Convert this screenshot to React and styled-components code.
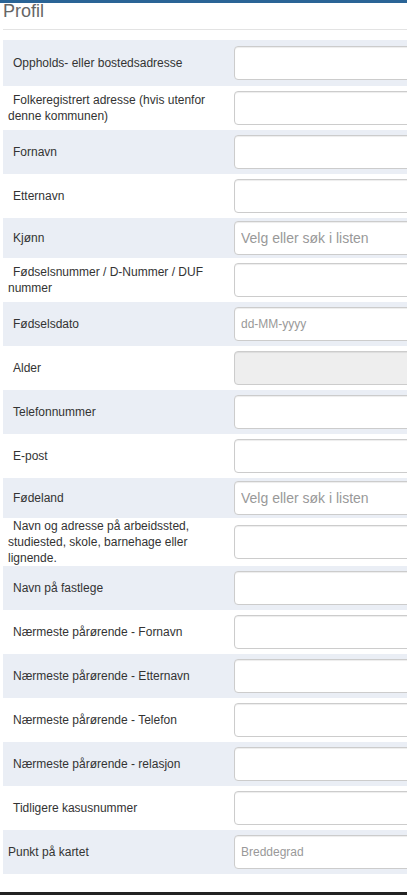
import React from 'react'
import styled, { createGlobalStyle } from 'styled-components'

const GlobalStyle = createGlobalStyle`
  html, body {
    margin: 0;
    padding: 0;
    background: #ffffff;
    overflow: hidden;
  }
  body {
    font-family: "Liberation Sans", Arial, sans-serif;
    color: #333333;
  }
  * {
    box-sizing: border-box;
  }
`

const fields = [
  { label: 'Oppholds- eller bostedsadresse' },
  { label: 'Folkeregistrert adresse (hvis utenfor denne kommunen)' },
  { label: 'Fornavn' },
  { label: 'Etternavn' },
  { label: 'Kjønn', select: true, placeholder: 'Velg eller søk i listen' },
  { label: 'Fødselsnummer / D-Nummer / DUF nummer' },
  { label: 'Fødselsdato', placeholder: 'dd-MM-yyyy' },
  { label: 'Alder', disabled: true },
  { label: 'Telefonnummer' },
  { label: 'E-post' },
  { label: 'Fødeland', select: true, placeholder: 'Velg eller søk i listen' },
  { label: 'Navn og adresse på arbeidssted, studiested, skole, barnehage eller lignende.' },
  { label: 'Navn på fastlege' },
  { label: 'Nærmeste pårørende - Fornavn' },
  { label: 'Nærmeste pårørende - Etternavn' },
  { label: 'Nærmeste pårørende - Telefon' },
  { label: 'Nærmeste pårørende - relasjon' },
  { label: 'Tidligere kasusnummer' },
  { label: 'Punkt på kartet', placeholder: 'Breddegrad', flush: true },
]

const App = () => {
  return (
    <Page>
      <GlobalStyle />
      <TopBar />
      <Content>
        <Title>Profil</Title>
        <Divider />
        <Table>
          {fields.map((f, i) => (
            <Row key={i} $select={f.select}>
              <Label $flush={f.flush}>{f.label}</Label>
              <Field>
                <Input
                  type="text"
                  placeholder={f.placeholder || ''}
                  disabled={f.disabled}
                  $select={f.select}
                  readOnly
                />
              </Field>
            </Row>
          ))}
        </Table>
      </Content>
      <Footer />
    </Page>
  )
}

const Page = styled.div`
  display: flex;
  flex-direction: column;
  width: 100%;
`

const TopBar = styled.div`
  height: 3px;
  background: #2a6496;
`

const Content = styled.div`
  padding-left: 3px;
`

const Title = styled.h2`
  margin: 0;
  height: 26px;
  font-size: 18px;
  font-weight: normal;
  line-height: 17px;
  color: #666666;
`

const Divider = styled.div`
  height: 1px;
  background: #e3e3e3;
  margin-bottom: 10px;
`

const Table = styled.div`
  display: flex;
  flex-direction: column;
`

const Row = styled.div`
  display: flex;
  align-items: center;
  min-height: ${p => (p.$select ? '40px' : '44px')};

  &:nth-child(odd) {
    background: #eaeef5;
  }

  &:first-child {
    min-height: 46px;
  }
`

const Label = styled.div`
  flex: 0 0 231px;
  padding: 0 8px 0 5px;
  font-size: 12px;
  line-height: 16px;
  color: #333333;
  text-indent: ${p => (p.$flush ? '0' : '5px')};
`

const Field = styled.div`
  flex: 0 0 220px;
`

const Input = styled.input`
  display: block;
  width: 100%;
  height: 34px;
  margin: 0;
  padding: 0 6px;
  border: 1px solid #cccccc;
  border-radius: 4px;
  background: ${p => (p.disabled ? '#eeeeee' : '#ffffff')};
  box-shadow: inset 0 1px 1px rgba(0, 0, 0, 0.075);
  font-family: "Liberation Sans", Arial, sans-serif;
  font-size: ${p => (p.$select ? '14px' : '12px')};
  color: #555555;
  outline: none;

  &::placeholder {
    color: #999999;
    opacity: 1;
  }
`

const Footer = styled.div`
  height: 3px;
  margin-top: 18px;
  background: #222222;
`

export default App
